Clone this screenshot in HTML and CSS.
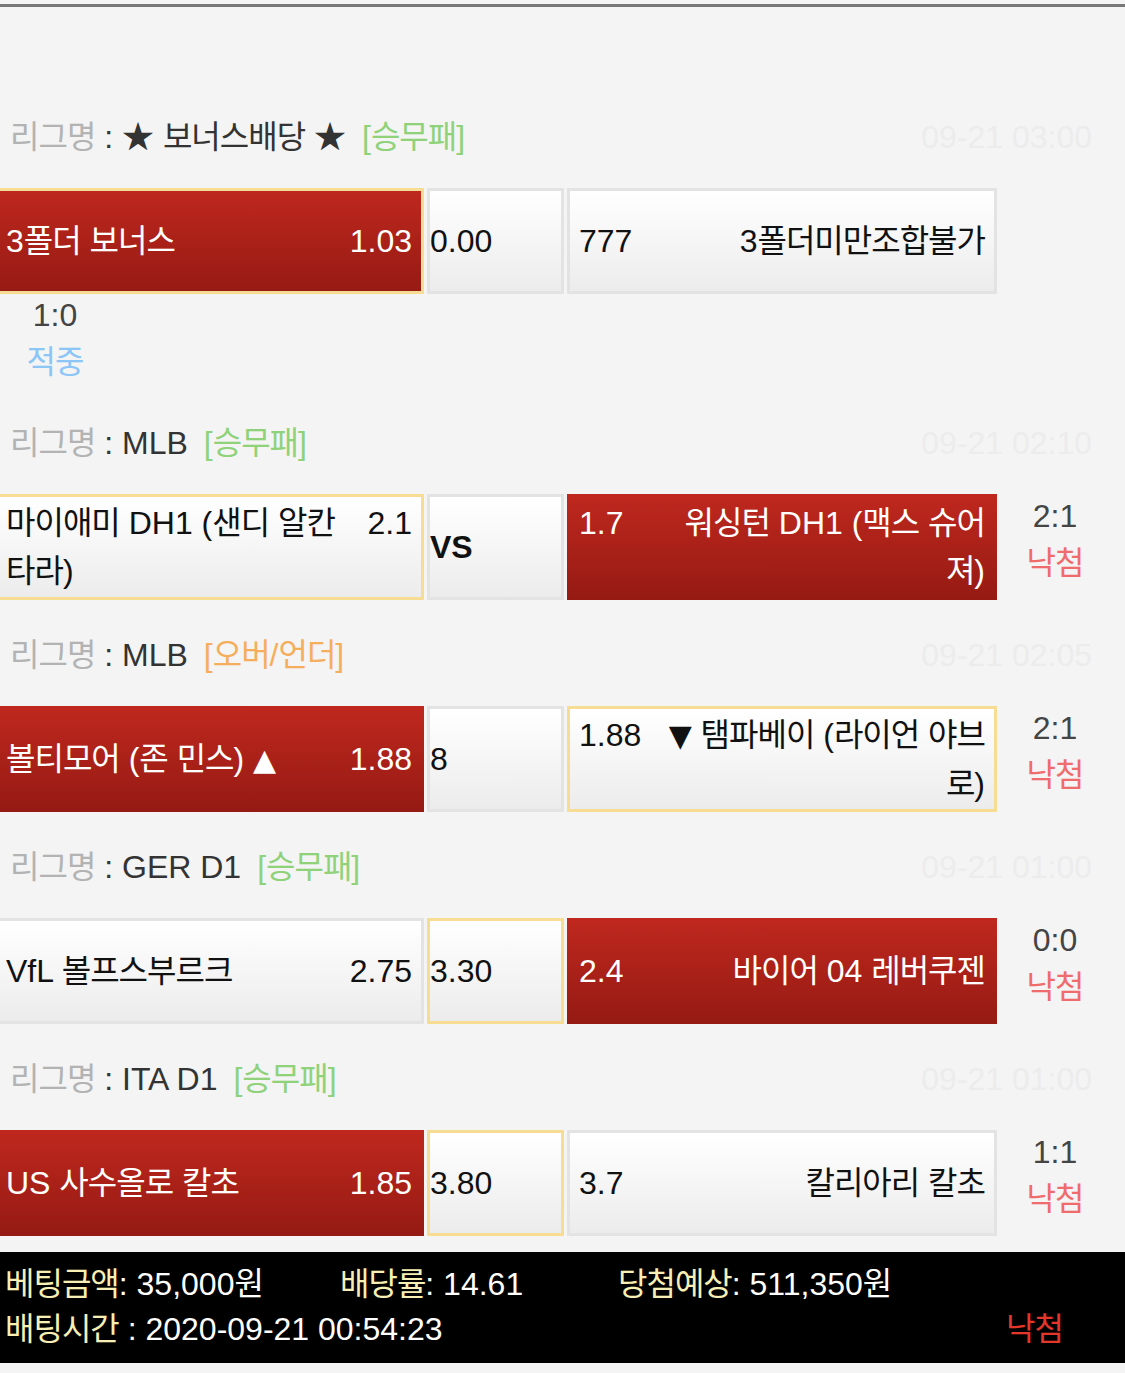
FILE: index.html
```html
<!DOCTYPE html>
<html lang="ko">
<head>
<meta charset="utf-8">
<title>배팅내역</title>
<link rel="stylesheet" href="styles.css">
</head>
<body>
<div class="topline"></div>
<main class="list">

  <section class="game">
    <div class="league">
      <div class="league-name"><span class="lbl k">리그명</span> : ★ <span class="k">보너스배당</span> ★<span class="tag g">[<span class="k">승무패</span>]</span></div>
      <div class="date">09-21 03:00</div>
    </div>
    <div class="row">
      <div class="box home red picked"><div class="inner"><span class="odds">1.03</span>3<span class="k">폴더 보너스</span></div></div>
      <div class="box draw"><div class="inner">0.00</div></div>
      <div class="box away"><div class="inner"><span class="odds">777</span>3<span class="k">폴더미만조합불가</span></div></div>
    </div>
    <div class="score below"><div>1:0</div><div class="hit k">적중</div></div>
  </section>

  <section class="game">
    <div class="league">
      <div class="league-name"><span class="lbl k">리그명</span> : MLB<span class="tag g">[<span class="k">승무패</span>]</span></div>
      <div class="date">09-21 02:10</div>
    </div>
    <div class="row">
      <div class="box home picked"><div class="inner"><span class="odds">2.1</span><span class="k">마이애미</span> DH1 (<span class="k">샌디 알칸타라</span>)</div></div>
      <div class="box draw"><div class="inner"><b>VS</b></div></div>
      <div class="box away red"><div class="inner"><span class="odds">1.7</span><span class="k">워싱턴</span> DH1 (<span class="k">맥스 슈어져</span>)</div></div>
      <div class="score"><div>2:1</div><div class="res k">낙첨</div></div>
    </div>
  </section>

  <section class="game">
    <div class="league">
      <div class="league-name"><span class="lbl k">리그명</span> : MLB<span class="tag o">[<span class="k">오버</span>/<span class="k">언더</span>]</span></div>
      <div class="date">09-21 02:05</div>
    </div>
    <div class="row">
      <div class="box home red"><div class="inner"><span class="odds">1.88</span><span class="k">볼티모어</span> (<span class="k">존 민스</span>) <span class="arr">▲</span></div></div>
      <div class="box draw"><div class="inner">8</div></div>
      <div class="box away picked"><div class="inner"><span class="odds">1.88</span><span class="arr">▼</span> <span class="k">탬파베이</span> (<span class="k">라이언 야브로</span>)</div></div>
      <div class="score"><div>2:1</div><div class="res k">낙첨</div></div>
    </div>
  </section>

  <section class="game">
    <div class="league">
      <div class="league-name"><span class="lbl k">리그명</span> : GER D1<span class="tag g">[<span class="k">승무패</span>]</span></div>
      <div class="date">09-21 01:00</div>
    </div>
    <div class="row">
      <div class="box home"><div class="inner"><span class="odds">2.75</span>VfL <span class="k">볼프스부르크</span></div></div>
      <div class="box draw picked"><div class="inner">3.30</div></div>
      <div class="box away red"><div class="inner"><span class="odds">2.4</span><span class="k">바이어</span> 04 <span class="k">레버쿠젠</span></div></div>
      <div class="score"><div>0:0</div><div class="res k">낙첨</div></div>
    </div>
  </section>

  <section class="game last">
    <div class="league">
      <div class="league-name"><span class="lbl k">리그명</span> : ITA D1<span class="tag g">[<span class="k">승무패</span>]</span></div>
      <div class="date">09-21 01:00</div>
    </div>
    <div class="row">
      <div class="box home red"><div class="inner"><span class="odds">1.85</span>US <span class="k">사수올로 칼초</span></div></div>
      <div class="box draw picked"><div class="inner">3.80</div></div>
      <div class="box away"><div class="inner"><span class="odds">3.7</span><span class="k">칼리아리 칼초</span></div></div>
      <div class="score"><div>1:1</div><div class="res k">낙첨</div></div>
    </div>
  </section>

</main>
<footer class="summary">
  <div class="sum-line">
    <span class="cell c1"><span class="lab k">베팅금액</span>: 35,000<span class="k">원</span></span>
    <span class="cell c2"><span class="lab k">배당률</span>: 14.61</span>
    <span class="cell"><span class="lab k">당첨예상</span>: 511,350<span class="k">원</span></span>
  </div>
  <div class="sum-line split">
    <span><span class="lab k">배팅시간</span> : 2020-09-21 00:54:23</span>
    <span class="final k">낙첨</span>
  </div>
</footer>
</body>
</html>
```

FILE: styles.css
```css
html {
  background: #f4f4f4;
}

body {
  margin: 0;
  background: #f4f4f4;
  font-family: "Liberation Sans", "Noto Sans CJK KR", sans-serif;
  font-size: 32px;
  color: #111;
}

.k {
  letter-spacing: -1px;
  word-spacing: 1px;
}

.arr {
  font-family: "DejaVu Sans", sans-serif;
  font-size: 30px;
}

.topline {
  height: 3px;
  margin-top: 4px;
  background: #787878;
}

.list {
  padding-top: 106px;
}

.game {
  padding-bottom: 31px;
}

.game.last {
  padding-bottom: 16px;
}

.league {
  display: flex;
  justify-content: space-between;
  align-items: center;
  height: 48px;
  line-height: 48px;
  padding: 0 33px 0 10px;
  margin-bottom: 27px;
  white-space: nowrap;
}

.league-name {
  color: #333;
}

.lbl {
  color: #b3b3b3;
}

.tag {
  margin-left: 16px;
}

.tag.g {
  color: #8fd27a;
}

.tag.o {
  color: #f5ae5c;
}

.date {
  color: #ececec;
}

.row {
  display: flex;
  align-items: flex-start;
  gap: 3px;
  height: 106px;
  margin-left: -6px;
}

.box {
  box-sizing: border-box;
  flex: none;
  height: 106px;
  display: flex;
  align-items: center;
  padding: 0 9px;
  border: 3px solid #e3e3e3;
  background: linear-gradient(#ffffff, #ececec);
  line-height: 48px;
  color: #111;
}

.inner {
  display: flow-root;
  width: 100%;
}

.home {
  width: 430px;
}

.draw {
  width: 137px;
  padding: 0;
}

.away {
  width: 430px;
  text-align: right;
}

.home .odds {
  float: right;
  min-width: 56px;
  text-align: right;
}

.away .odds {
  float: left;
  min-width: 72px;
  text-align: left;
}

.red {
  border-color: transparent;
  background: linear-gradient(#bf281e, #951a13);
  background-origin: border-box;
  color: #fff;
}

.picked {
  border-color: #f7dd93;
}

.score {
  flex: none;
  width: 110px;
  margin-top: -1px;
  text-align: center;
  line-height: 47px;
  color: #444;
}

.score.below {
  margin-top: -2px;
  margin-bottom: 2px;
}

.score .res {
  color: #f06b6b;
}

.score .hit {
  color: #8cc6f6;
}

.summary {
  background: #000;
  color: #fff;
  padding: 10px 0 11px 5px;
  line-height: 45px;
}

.sum-line {
  display: flex;
  white-space: nowrap;
}

.sum-line.split {
  justify-content: space-between;
  padding-right: 62px;
}

.c1 {
  width: 335px;
}

.c2 {
  width: 278px;
}

.lab {
  color: #f7efb4;
}

.final {
  color: #e4362a;
}
```
